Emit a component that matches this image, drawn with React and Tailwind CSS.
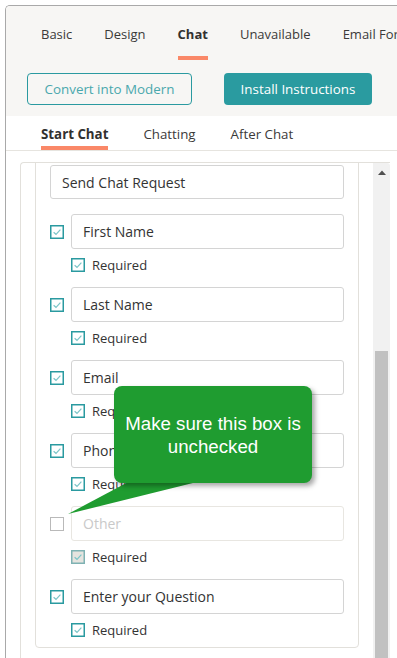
import React from "react";

function Check({ state = "on" }) {
  if (state === "off") {
    return (
      <svg width="14" height="14" viewBox="0 0 14 14" className="shrink-0">
        <rect x="0.5" y="0.5" width="13" height="13" fill="#fff" stroke="#b9b9b9" strokeWidth="1" />
      </svg>
    );
  }
  const disabled = state === "disabled";
  return (
    <svg width="14" height="14" viewBox="0 0 14 14" className="shrink-0">
      <rect
        x="0.75"
        y="0.75"
        width="12.5"
        height="12.5"
        fill={disabled ? "#e6e4df" : "#fff"}
        stroke={disabled ? "#7fb2b3" : "#2a9aa0"}
        strokeWidth="1.5"
      />
      <path d="M3.6 7.2 L6 9.3 L10.4 4.6" fill="none" stroke="#7cc5c8" strokeWidth="1.2" />
    </svg>
  );
}

function Field({ label, checked = true, placeholder = false }) {
  return (
    <div className="mt-[15px] flex flex-col">
      <div className="flex items-center gap-[7px]">
        <Check state={checked ? "on" : "off"} />
        <div
          className={
            "h-[35px] flex-1 rounded-[3px] border flex items-center pl-[11px] text-[14px] " +
            (placeholder ? "border-[#e8e6e1] text-[#c9c9c9]" : "border-[#d4d4d4] text-[#333333]")
          }
        >
          {label}
        </div>
      </div>
      <div className="mt-[9px] ml-[21px] flex items-center gap-[7px] h-[14px]">
        <Check state={checked ? "on" : "disabled"} />
        <span className="text-[13px] leading-[14px] text-[#333333]">Required</span>
      </div>
    </div>
  );
}

export default function App() {
  const tabs = ["Basic", "Design", "Chat", "Unavailable", "Email Form"];
  const subtabs = ["Start Chat", "Chatting", "After Chat"];
  return (
    <div
      className="relative w-[397px] h-[658px] overflow-hidden bg-white pl-[5px] pt-[5px]"
      style={{ fontFamily: "'Segoe UI', 'Open Sans', 'Noto Sans', sans-serif" }}
    >
      <div className="h-full flex flex-col border-l border-t border-[#a9a9a9] rounded-tl-[5px] overflow-hidden">
        {/* header */}
        <div className="bg-[#f7f6f4] h-[110px] shrink-0 flex flex-col">
          <div className="flex pl-[20px] gap-[2px] whitespace-nowrap">
            {tabs.map((t) => (
              <div key={t} className="flex flex-col px-[15px] pt-[18px]">
                <span
                  className={
                    "text-[13px] leading-[20px] " +
                    (t === "Chat" ? "font-bold text-[#323130]" : "text-[#3b3a39]")
                  }
                >
                  {t}
                </span>
                <div className={"mt-[12px] h-[4px] " + (t === "Chat" ? "bg-[#fa8868]" : "bg-transparent")} />
              </div>
            ))}
          </div>
          <div className="flex pl-[21px] mt-[13px] gap-[32px]">
            <div className="w-[165px] h-[32px] rounded-[4px] border border-[#2a9aa0] flex items-center justify-center text-[13.4px] text-[#4aa8ad]">
              Convert into Modern
            </div>
            <div className="w-[148px] h-[32px] rounded-[4px] bg-[#2a9ba0] flex items-center justify-center text-[13.4px] text-white">
              Install Instructions
            </div>
          </div>
        </div>

        {/* subtabs */}
        <div className="flex pl-[21px] gap-[7px] border-b border-[#e6e4df] shrink-0">
          {subtabs.map((t, i) => (
            <div key={t} className="flex flex-col px-[14px] pt-[8px]">
              <span
                className={
                  "text-[13.3px] leading-[20px] " + (i === 0 ? "font-bold text-[#323130]" : "text-[#3b3a39]")
                }
              >
                {t}
              </span>
              <div className={"mt-[2px] h-[4px] " + (i === 0 ? "bg-[#fa8868]" : "bg-transparent")} />
            </div>
          ))}
        </div>

        {/* panel */}
        <div className="mt-[11px] ml-[14px] w-[370px] flex-1 flex border-l border-t border-[#e2e0db] rounded-tl-[4px] overflow-hidden">
          <div className="flex-1 overflow-hidden">
            <div className="ml-[14px] mr-[14px] -mt-[20px] border border-[#e2e0db] rounded-b-[4px] pt-[21px] px-[14px] pb-[10px] flex flex-col">
              <div className="h-[34px] rounded-[3px] border border-[#d4d4d4] flex items-center pl-[11px] text-[14px] text-[#333333]">
                Send Chat Request
              </div>
              <Field label="First Name" />
              <Field label="Last Name" />
              <Field label="Email" />
              <Field label="Phone" />
              <Field label="Other" checked={false} placeholder />
              <Field label="Enter your Question" />
            </div>
          </div>
          {/* scrollbar */}
          <div className="w-[17px] shrink-0 bg-[#f1f1f1] rounded-tr-[3px] flex flex-col items-center">
            <svg width="8" height="5" viewBox="0 0 8 5" className="mt-[7px]">
              <path d="M0 5 L4 0.5 L8 5 Z" fill="#505050" />
            </svg>
            <div className="mt-[176px] w-[13px] flex-1 bg-[#c1c1c1]" />
          </div>
        </div>
      </div>

      {/* callout */}
      <svg
        className="absolute left-0 top-0 pointer-events-none"
        width="397"
        height="658"
        viewBox="0 0 397 658"
      >
        <polygon points="132,480 205,480 68,514" fill="#1f9c30" />
      </svg>
      <div
        className="absolute left-[114px] top-[386px] w-[198px] h-[97px] rounded-[8px] bg-[#1f9c30] shadow-[3px_3px_5px_rgba(0,0,0,0.35)] flex items-center justify-center text-center text-white text-[18.7px] leading-[23px]"
        style={{ fontFamily: "'Liberation Sans', Arial, sans-serif" }}
      >
        <span>
          Make sure this box is
          <br />
          unchecked
        </span>
      </div>
    </div>
  );
}
